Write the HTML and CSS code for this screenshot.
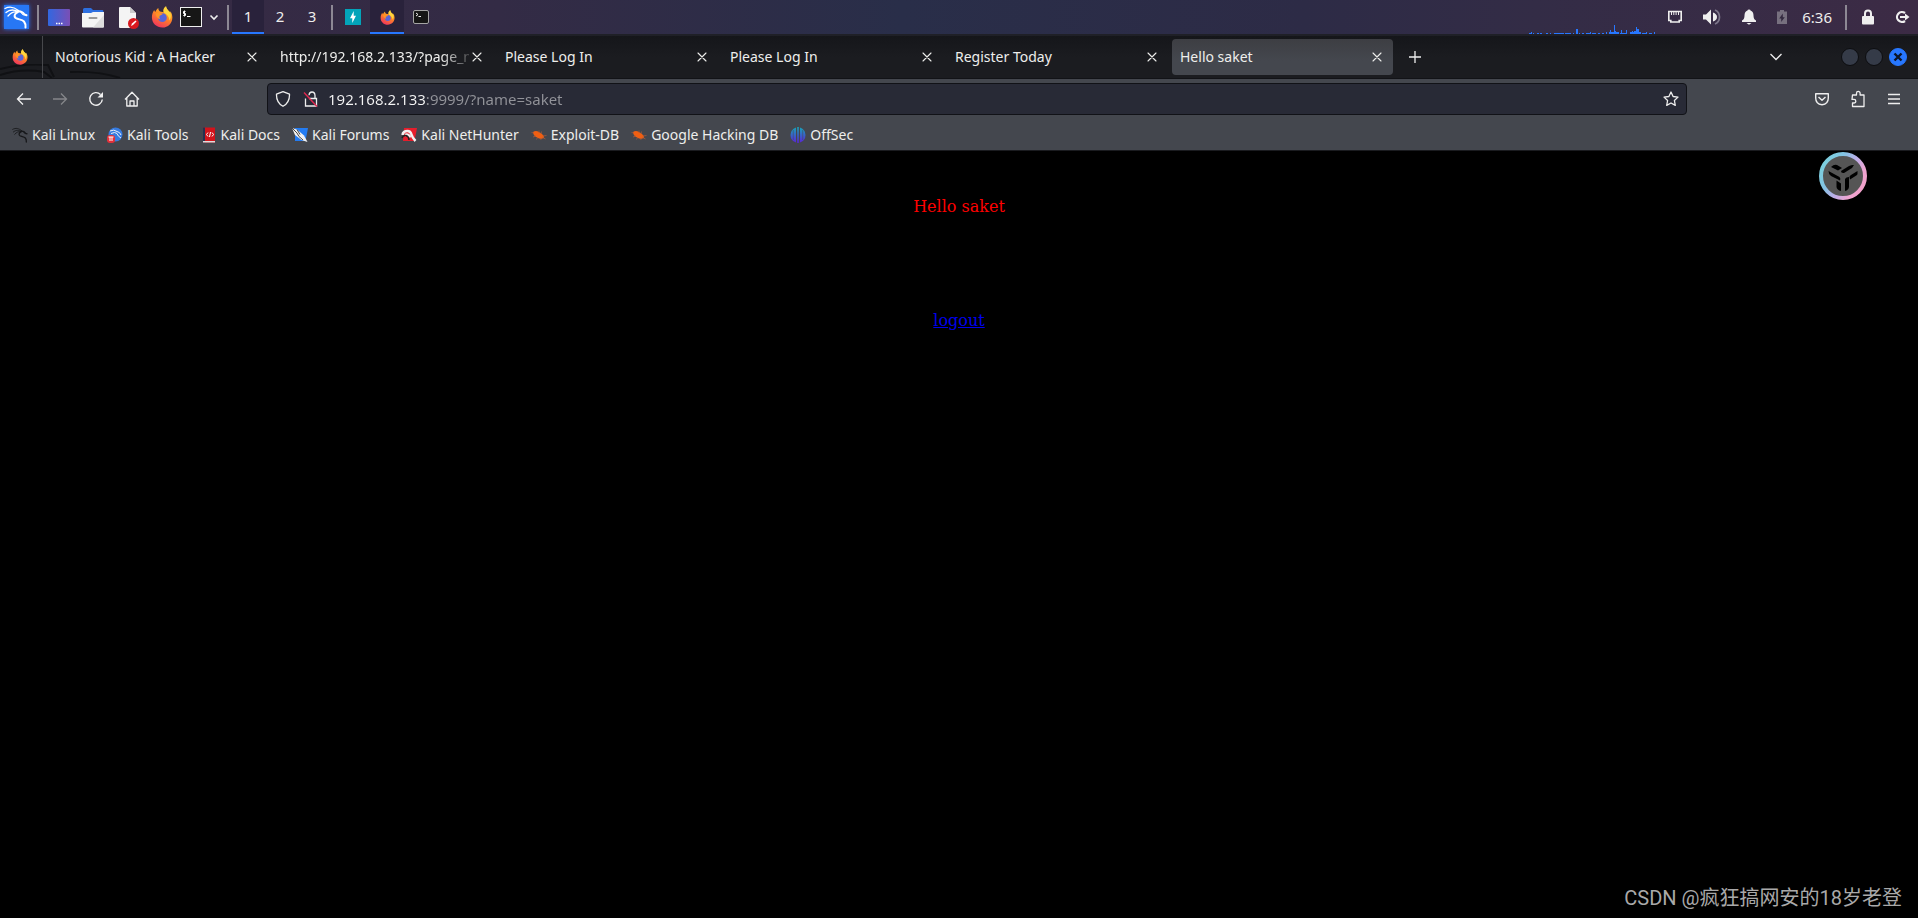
FILE: index.html
```html
<!DOCTYPE html>
<html lang="en">
<head>
<meta charset="utf-8">
<title>Hello saket</title>
<link rel="stylesheet" href="styles.css">
</head>
<body>
<svg class="defs" aria-hidden="true">
  <defs>
    <linearGradient id="desk" x1="0" y1="0" x2="1" y2="0"><stop offset="0" stop-color="#3267e0"/><stop offset="1" stop-color="#7a4fb5"/></linearGradient>
    <linearGradient id="flame" x1=".8" y1="0" x2=".3" y2="1"><stop offset="0" stop-color="#ffd43a"/><stop offset=".45" stop-color="#ff8a22"/><stop offset="1" stop-color="#f0335f"/></linearGradient>
    <linearGradient id="off" x1="0" y1="0" x2="0" y2="1"><stop offset="0" stop-color="#16a6b8"/><stop offset="1" stop-color="#5a22d8"/></linearGradient>
    <linearGradient id="ring" x1="0" y1=".2" x2="1" y2=".8"><stop offset="0" stop-color="#7bd0dc"/><stop offset=".3" stop-color="#83c4e4"/><stop offset=".55" stop-color="#bcaee8"/><stop offset=".8" stop-color="#efa5d2"/><stop offset="1" stop-color="#f2a0c8"/></linearGradient>
    <symbol id="dragon" viewBox="0 0 24 24">
      <g fill="none" stroke="currentColor" stroke-linecap="round" stroke-linejoin="round">
        <path stroke-width="1.3" d="M1 3.500C6 .8 10 2 14.500 5.500M2 7.500C6 4 10 4.500 14 6.500M4 11c3-3.500 6-4.500 9-4"/>
        <path stroke-width="2" d="M13 6.500c3-.8 5.500.2 7.500 3l2 .8M14 7c-3.500 1.500-4.500 4.500-2 6.200 2.500 1.500 6 1 8 3.300 1.300 1.600 1.700 3.600 1.500 6"/>
        <path stroke-width="1" d="M17 7.500c.5 1.500 1.500 2.300 3 2.500"/>
      </g>
    </symbol>
    <symbol id="firefox" viewBox="0 0 24 24">
      <path fill="url(#flame)" d="M12.500 23.500C6 23.500 1 18.800 1 12.600c0-3 .8-6 2.500-8.300.3 1 .7 1.700 1.200 2.300C5.500 4.800 6.500 3.200 8 2.200c0 1.800.6 3 1.800 3.800l4 .8c-.6-2.600.3-5 2.600-6.500.2 2.500 1.800 4 3.300 5.400.5.5.9 1 1.200 1.600l.3-1.700c1.400 2 2.100 4.400 2.100 6.900 0 6.300-4.700 11-10.800 11z"/>
      <path fill="#ffd63c" d="M16.400.3c.2 2.500 1.800 4 3.300 5.400 2.600 2.700 2.600 7.100.4 10-.2-4.200-2.400-6.400-6.300-8.900-.6-2.600.3-5 2.600-6.500z"/>
      <circle cx="12.400" cy="12.700" r="4.800" fill="#5865d8"/>
      <path fill="#ff9326" d="M5 8.500c2-1.500 4-1.500 5.500-.5l2.500.3c-.5 1.400-2 1.800-3.500 2.200-.6 1.500-.4 3 .8 3.900-1.800.1-5.300-2.900-5.300-5.900z"/>
    </symbol>
    <symbol id="close" viewBox="0 0 16 16"><path d="M4 4l8 8M12 4l-8 8" fill="none" stroke="currentColor" stroke-width="1.100" stroke-linecap="round"/></symbol>
    <symbol id="bug" viewBox="0 0 16 16">
      <path fill="#f05f12" d="M2 5c2-1.500 4-1.300 6 0 2.300 1.300 4.500 2.800 5.200 5.200-2 2-4.500 1.800-6.700.6C3.700 9.700 2.300 8 2 5z"/>
      <path stroke="#b05a38" stroke-width=".7" fill="none" d="M.5 5.500L3 6M2 10l3-1M5.500 12.500l1-2M10 13l-.5-2M8 3.500L8 6M10.500 4.500L10 7M15.500 8.500l-4 .6M14.500 12l-3-1.500"/>
    </symbol>
  </defs>
</svg>

<header class="panel">
  <button class="pbtn menu-btn" aria-label="Applications"><span class="kali"><svg width="24" height="24"><use href="#dragon"/></svg></span></button>
  <span class="sep"></span>
  <nav class="launchers" aria-label="Launchers">
    <button class="pbtn" aria-label="Show desktop"><svg width="22" height="24" viewBox="0 0 22 24"><rect y="4" width="22" height="17" rx="1" fill="url(#desk)"/><path d="M8 18.500h1.500M10.500 18.500H12M13 18.500h1.500" stroke="#fff" stroke-width="1.500"/></svg></button>
    <button class="pbtn" aria-label="Files"><svg width="22" height="24" viewBox="0 0 22 24"><path fill="#2d6fe0" d="M1 4.500Q1 3 2.500 3H9l2 2h9.500Q21.500 5 21.500 7v3H1z"/><path fill="#f4f4f4" d="M0 8h9l2-1h11v14.500q0 1-1 1H1q-1 0-1-1z"/><path fill="#dedede" d="M22 10v11.500q0 1-1 1H11z"/><path stroke="#9a9a9a" stroke-width="2" stroke-linecap="round" d="M7.500 13h7"/></svg></button>
    <button class="pbtn" aria-label="Text editor"><svg width="23" height="24" viewBox="-2 0 23 24"><path fill="#f4f4f4" d="M1 3q0-1 1-1h10l6 6v14q0 1-1 1H2q-1 0-1-1z"/><path fill="#c9c9c9" d="M12 2l6 6h-6z"/><circle cx="15.500" cy="18.500" r="5.500" fill="#d8191f"/><path d="M13 21l1-2.500 3.500-3 1 1-3.500 3.500z" fill="#fff"/></svg></button>
    <button class="pbtn" aria-label="Firefox"><svg width="22" height="22"><use href="#firefox"/></svg></button>
  </nav>
  <button class="pbtn term" aria-label="Terminal"><svg width="22" height="22" viewBox="0 0 22 22"><rect x=".5" y="1.500" width="21" height="19" fill="#161616" stroke="#efefef"/><path d="M5.500 5.500H3.500V7.500H5.500V9.500H3.300M4.500 4.500v6M7 10.500h3.500" fill="none" stroke="#fff"/></svg></button>
  <button class="pbtn more" aria-label="More terminals"><svg width="10" height="10" viewBox="0 0 10 10"><path d="M1.500 3.500L5 7l3.500-3.500" fill="none" stroke="#eee" stroke-width="1.600"/></svg></button>
  <span class="sep"></span>
  <nav class="spaces" aria-label="Workspaces">
    <button class="space on">1</button><button class="space">2</button><button class="space">3</button>
  </nav>
  <span class="sep"></span>
  <nav class="tasks" aria-label="Windows">
    <button class="task" aria-label="Burp Suite"><svg width="16" height="16" viewBox="0 0 16 16"><rect width="16" height="16" fill="#03a4b9"/><path fill="#fff" d="M8.700 2v4.800H11L7.300 14V9.200H5z"/></svg></button>
    <button class="task on" aria-label="Firefox"><svg width="15" height="15"><use href="#firefox"/></svg></button>
    <button class="task" aria-label="Terminal"><svg width="16" height="16" viewBox="0 0 16 16"><rect x=".5" y="1.500" width="15" height="13" rx="1.500" fill="#161616" stroke="#a5a5a5"/><path d="M3 4l2 1.500L3 7M5.500 7.500H8" fill="none" stroke="#eee"/></svg></button>
  </nav>
  <svg class="graph" width="128" height="10" viewBox="0 0 128 10" aria-hidden="true"><path fill="#2777ff" d="M0 9h2v1H0zM2 8h1v2H2zM4 9h1v1H4zM8 9h2v1H8zM11 9h2v1h-2zM17 9h2v1h-2zM21 9h1v1h-1zM25 9h10v1H25zM36 9h6v1h-6zM44 9h1v1h-1zM47 5h2v5h-2zM50 9h1v1h-1zM53 9h2v1h-2zM57 9h4v1h-4zM61 8h1v2h-1zM63 9h4v1h-4zM69 9h2v1h-2zM73 9h2v1h-2zM77 8h1v2h-1zM80 8h2v2h-2zM81 6h1v4h-1zM82 8h8v2h-8zM85 1h1v9h-1zM86 7h1v3h-1zM91 9h6v1h-6zM92 6h1v4h-1zM97 6h1v4h-1zM101 8h6v2h-6zM103 7h1v3h-1zM105 7h2v3h-2zM107 3h1v7h-1zM108 5h2v5h-2zM110 8h2v2h-2zM113 9h4v1h-4zM117 8h1v2h-1zM120 9h3v1h-3zM125 8h1v2h-1z"/></svg>
  <div class="tray">
    <button class="pbtn" aria-label="Network"><svg width="16" height="16" viewBox="0 0 16 16"><path fill="none" stroke="#efefef" stroke-width="1.600" d="M1.800 2.500h12.400v9h-2v1.500H3.800v-1.500h-2z"/><path stroke="#efefef" d="M4.500 3v3M6.800 3v3M9.100 3v3M11.500 3v3"/></svg></button>
    <button class="pbtn" aria-label="Volume"><svg width="18" height="16" viewBox="0 0 18 16"><path fill="#efefef" d="M0 5.500h3L8 .5v15l-5-5H0zM10 3.500q4 1.500 4 4.500t-4 4.500z"/><path fill="none" stroke="#7d768a" stroke-width="1.700" d="M12 1q4.500 2 4.500 7T12 15"/></svg></button>
    <button class="pbtn" aria-label="Notifications"><svg width="16" height="16" viewBox="0 0 16 16"><path fill="#efefef" d="M6.500 1.500Q6.500.5 8 .5t1.500 1Q12.500 2.500 12.500 6.500q0 4 2.500 5V13H1v-1.500q2.500-1 2.500-5 0-4 3-5zM5.500 14h5L8 15.800z"/></svg></button>
    <button class="pbtn" aria-label="Power"><svg width="10" height="16" viewBox="0 0 10 16"><path fill="#77707f" d="M0 2.500h3V1h4v1.500h3V15H0z"/><path fill="#342a40" d="M5.800 4.500v3.800h2L4.200 13V9.500h-2z"/></svg></button>
    <time class="clock">6:36</time>
    <span class="sep"></span>
    <button class="pbtn" aria-label="Lock screen"><svg width="12" height="16" viewBox="0 0 12 16"><path fill="none" stroke="#efefef" stroke-width="2" d="M3 8V4.500Q3 1.500 6 1.500t3 3V8"/><rect y="7" width="12" height="8.500" rx="1" fill="#efefef"/></svg></button>
    <button class="pbtn" aria-label="Log out"><svg width="16" height="16" viewBox="0 0 16 16"><path fill="none" stroke="#efefef" stroke-width="2.200" d="M11 4A5 5 0 1 0 11 12M6 8h6"/><path fill="#efefef" d="M11 4.500L15.500 8 11 11.500z"/></svg></button>
  </div>
</header>

<section class="tabbar">
  <svg class="ghost" width="130" height="14" viewBox="0 0 130 14" aria-hidden="true"><path fill="none" stroke="#101114" stroke-width="2" d="M0 5Q24-1 48 1l6 12M0 11Q22 4 44 8l8 6M70 8q30-1 50 6"/></svg>
  <button class="pin" aria-label="Firefox View"><svg width="16" height="16"><use href="#firefox"/></svg></button>
  <div class="tabs" role="tablist">
    <div class="tab" role="tab"><span class="title">Notorious Kid : A Hacker</span><button class="x" aria-label="Close tab"><svg width="16" height="16"><use href="#close"/></svg></button></div>
    <div class="tab" role="tab"><span class="title fade">http://192.168.2.133/?page_n</span><button class="x" aria-label="Close tab"><svg width="16" height="16"><use href="#close"/></svg></button></div>
    <div class="tab" role="tab"><span class="title">Please Log In</span><button class="x" aria-label="Close tab"><svg width="16" height="16"><use href="#close"/></svg></button></div>
    <div class="tab" role="tab"><span class="title">Please Log In</span><button class="x" aria-label="Close tab"><svg width="16" height="16"><use href="#close"/></svg></button></div>
    <div class="tab" role="tab"><span class="title">Register Today</span><button class="x" aria-label="Close tab"><svg width="16" height="16"><use href="#close"/></svg></button></div>
    <div class="tab on" role="tab" aria-selected="true"><span class="title">Hello saket</span><button class="x" aria-label="Close tab"><svg width="16" height="16"><use href="#close"/></svg></button></div>
  </div>
  <button class="tool new" aria-label="New tab"><svg width="16" height="16" viewBox="0 0 16 16"><path d="M8 2v12M2 8h12" stroke="#eee" stroke-width="1.300"/></svg></button>
  <div class="winctl">
    <button class="tool all" aria-label="List all tabs"><svg width="16" height="16" viewBox="0 0 16 16"><path d="M2.500 5L8 10.500 13.500 5" fill="none" stroke="#eee" stroke-width="1.300"/></svg></button>
    <button class="dot" aria-label="Minimize"></button>
    <button class="dot" aria-label="Maximize"></button>
    <button class="dot quit" aria-label="Close window"><svg width="10" height="10" viewBox="0 0 10 10"><path d="M1.500 1.500l7 7M8.500 1.500l-7 7" stroke="#0c1528" stroke-width="2.400"/></svg></button>
  </div>
</section>

<section class="navbar">
  <div class="group">
    <button class="tool" aria-label="Back"><svg width="16" height="16" viewBox="0 0 16 16"><path d="M15 8H1.500M7 2.500L1.500 8 7 13.500" fill="none" stroke="#f0f0f0" stroke-width="1.300"/></svg></button>
    <button class="tool" aria-label="Forward" disabled><svg width="16" height="16" viewBox="0 0 16 16"><path d="M1 8h13.500M9 2.500L14.500 8 9 13.500" fill="none" stroke="#85868a" stroke-width="1.300"/></svg></button>
    <button class="tool" aria-label="Reload"><svg width="16" height="16" viewBox="0 0 16 16"><path d="M12.500 3.500A6.300 6.300 0 1 0 14.300 8.500" fill="none" stroke="#f0f0f0" stroke-width="1.400"/><path d="M15 1v5.500H9.500z" fill="#f0f0f0"/></svg></button>
    <button class="tool" aria-label="Home"><svg width="16" height="16" viewBox="0 0 16 16"><path d="M1 8.500L8 1.200l7 7.300M2.800 7v8h10.400V7M6 15v-5h4v5" fill="none" stroke="#f0f0f0" stroke-width="1.300" stroke-linejoin="round"/></svg></button>
  </div>
  <div class="urlbar">
    <svg width="16" height="16" viewBox="0 0 16 16"><path d="M8 .7l6.500 2.500Q14.800 11.500 8 15.300 1.200 11.500 1.500 3.200z" fill="none" stroke="#eee" stroke-width="1.300" stroke-linejoin="round"/></svg>
    <svg class="lock" width="16" height="16" viewBox="0 0 16 16"><path d="M6 4.200Q6.200 1 9 1t3 3.500V7M6 7.500h7.500V15h-11V7.500" fill="none" stroke="#eee" stroke-width="1.300"/><path d="M1 1.500l13 14" stroke="#e22850" stroke-width="1.400"/></svg>
    <input class="url" type="text" aria-label="Address" value="192.168.2.133:9999/?name=saket">
    <button class="star" aria-label="Bookmark this page"><svg width="16" height="16" viewBox="0 0 16 16"><path d="M8 1l2.100 4.500 4.900.6-3.600 3.400.9 4.900L8 12l-4.300 2.400.9-4.900L1 6.100l4.900-.6z" fill="none" stroke="#eee" stroke-width="1.300" stroke-linejoin="round"/></svg></button>
  </div>
  <div class="group end">
    <button class="tool" aria-label="Save to Pocket"><svg width="16" height="16" viewBox="0 0 16 16"><path d="M1.700 2.700h12.600V7q0 6-6.300 6.800Q1.700 13 1.700 7zM4.500 6L8 9.300 11.500 6" fill="none" stroke="#eee" stroke-width="1.400" stroke-linejoin="round"/></svg></button>
    <button class="tool" aria-label="Extensions"><svg width="16" height="18" viewBox="0 0 16 18"><path d="M2.500 5H6.500V3.200a1.800 1.800 0 0 1 3.600 0V5H14v11.500H2.500V13H4a1.800 1.800 0 0 0 0-3.600H2z" fill="none" stroke="#eee" stroke-width="1.300" stroke-linejoin="round"/></svg></button>
    <button class="tool" aria-label="Menu"><svg width="16" height="16" viewBox="0 0 16 16"><path d="M2 3.500h12M2 8h12M2 12.500h12" stroke="#eee" stroke-width="1.300"/></svg></button>
  </div>
</section>

<nav class="bookmarks" aria-label="Bookmarks">
  <a href="#"><svg class="dark" width="16" height="16"><use href="#dragon"/></svg>Kali Linux</a>
  <a href="#"><svg width="16" height="16" viewBox="0 0 16 16"><circle cx="8.500" cy="7.500" r="7" fill="#367be0"/><path d="M3 4q4-2 7 .5 3 .5 4 3.500M4 6.500q4-2 6 0 1 3 4 4.500" fill="none" stroke="#e9f0fb"/><rect y="8" width="8" height="8" rx="3" fill="#e2303a"/><path d="M1.500 10h5M3 10v4M5 10v4" stroke="#fff"/></svg>Kali Tools</a>
  <a href="#"><svg width="16" height="16" viewBox="0 0 16 16"><rect x="2" y=".5" width="12" height="15" fill="#d3131b"/><path fill="#263150" d="M2 .5h2v15H2z"/><path fill="#ddd" d="M2 14h12v1.500H2z"/><path d="M7 5.500L5.500 7.500 7 9.500M11 5.500l1.500 2L11 9.500M9.500 5l-1 5" fill="none" stroke="#fff"/></svg>Kali Docs</a>
  <a href="#"><svg width="16" height="16" viewBox="0 0 16 16"><path fill="#247cf2" d="M3 1h13l-2.500 13H3z"/><path fill="#f2f2f2" d="M0 1l5 1.500 7 6 3.500 6.500-6-2L3 8z"/><path d="M0 1l5 5 2 3.500 4 3.500M5 2.500l3 5" fill="none" stroke="#444"/></svg>Kali Forums</a>
  <a href="#"><svg width="16" height="16" viewBox="0 0 16 16"><path fill="#e51e2c" d="M3 1h13l-2.500 13H2z"/><path d="M1.500 8Q2 4 6.500 4q3 0 4 3.500t4 6.500M4 8q4-1.500 5 2.500" fill="none" stroke="#f2f2f2" stroke-width="2.500"/><path d="M1 11q1-3 4-2.500 3 1 3 4.500" fill="none" stroke="#222" stroke-width="1.500"/></svg>Kali NetHunter</a>
  <a href="#"><svg width="16" height="16"><use href="#bug"/></svg>Exploit-DB</a>
  <a href="#"><svg width="16" height="16"><use href="#bug"/></svg>Google Hacking DB</a>
  <a href="#"><svg width="16" height="16" viewBox="0 0 16 16"><path fill="url(#off)" d="M6 .5v15Q.5 13.500.5 8T6 .5zM7.200 0h1.600v16H7.200zM10 .5Q15.500 2.500 15.500 8T10 15.500z"/><path d="M3.300 3v10M12.700 3v10" stroke="#44474e" stroke-width=".5"/></svg>OffSec</a>
</nav>

<main class="page">
  <p class="hello">Hello saket</p>
  <a class="logout" href="#">logout</a>
  <svg class="badge" width="48" height="48" viewBox="0 0 48 48" aria-hidden="true">
    <circle cx="24" cy="24" r="22" fill="#555" stroke="url(#ring)" stroke-width="4"/>
    <g fill="#000"><path d="M12 15q3-3 6-2l5 3-4 2.500z"/><path d="M22 19l8-5q3-1.500 5-1l-2 3-8 5q-3 .5-3-2z"/><path d="M9.500 19l11 6q1.500 1.500.5 3.500L12 24q-2.500-1.500-2.500-5z"/><path d="M38.500 19v3q0 1-2 2L31 27.500l-.5-2.500q0-1 1.500-2z"/><path d="M17.500 28.500l4.500 3v7.500q-4-1-4.500-4z"/><path d="M26 27q1-2 4-2v10q-.5 3-4 4z"/></g>
  </svg>
  <p class="mark">CSDN @疯狂搞网安的18岁老登</p>
</main>
</body>
</html>
```
FILE: styles.css
```css
* { box-sizing: border-box; }
html, body { height: 100%; }
body {
  margin: 0;
  display: flex;
  flex-direction: column;
  background: #000;
  color: #eeeeec;
  font: 14px/20px "Noto Sans", "Noto Sans CJK SC", sans-serif;
}
button {
  margin: 0;
  padding: 0;
  border: 0;
  background: none;
  color: inherit;
  font: inherit;
  display: flex;
  align-items: center;
  justify-content: center;
}
svg { display: block; flex: none; }
.defs { position: absolute; width: 0; height: 0; }

/* Desktop panel */
.panel {
  flex: none;
  display: flex;
  align-items: center;
  height: 36px;
  padding: 0 8px 2px 4px;
  background: linear-gradient(#1f2027, #1f2027) bottom / 100% 2px no-repeat,
    linear-gradient(90deg, #372a43 0, #332b45 26%, #292e49 47%, #2d2b46 68%, #332c46 80%, #3c2b45 100%);
}
.sep { flex: none; width: 2px; height: 25px; background: #8d8894; }
.kali {
  width: 25px;
  height: 24px;
  background: #2777f5;
  color: #fff;
  box-shadow: 0 0 4px #2777ff;
}
.menu-btn { margin-right: 8px; }
.launchers { display: flex; align-items: center; gap: 12px; margin-left: 9px; }
.term { margin-left: 7px; }
.more { margin: 0 8px 0 7px; }
.spaces { display: flex; margin: 0 3px; align-self: stretch; font-size: 15px; }
.space { width: 32px; border-bottom: 2px solid transparent; }
.tasks { display: flex; margin-left: 3px; align-self: stretch; }
.task { width: 34px; border-bottom: 2px solid transparent; border-top: 2px solid transparent; }
.space.on, .task.on { background: #29223b; border-bottom-color: #2777ff; border-top-color: #29223b; }
.graph { margin-left: auto; align-self: flex-end; }
.tray { display: flex; align-items: center; margin-left: 10px; gap: 20px; }
.tray .sep { margin-right: -5px; }
.clock { margin: 0 -7px 0 -5px; font-size: 15px; }

/* Browser tabs */
.tabbar {
  position: relative;
  flex: none;
  display: flex;
  align-items: center;
  height: 43px;
  padding-right: 11px;
  border-bottom: 1px solid #121317;
  background: linear-gradient(#15161a, #1b1c20 50%);
}
.ghost { position: absolute; left: 0; bottom: 0; }
.pin { position: relative; flex: none; width: 43px; height: 100%; padding-right: 2px; border-right: 1px solid #47484c; }
.tabs { display: flex; flex: 0 1 1346px; gap: 4px; margin: 0 4px; }
.tab {
  flex: 1 1 0;
  min-width: 0;
  display: flex;
  align-items: center;
  height: 36px;
  padding: 0 8px;
  border-radius: 4px;
}
.tab.on { background: linear-gradient(#3d3e43, #44474e 60%); }
.title { flex: 1; min-width: 0; overflow: hidden; white-space: nowrap; }
.fade { -webkit-mask-image: linear-gradient(90deg, #000 85%, transparent 104%); mask-image: linear-gradient(90deg, #000 85%, transparent 104%); }
.x { flex: none; width: 16px; height: 16px; }
.tool { flex: none; width: 36px; height: 32px; }
.winctl { display: flex; align-items: center; gap: 6px; margin-left: auto; }
.all { margin-right: 41px; }
.dot { flex: none; width: 18px; height: 18px; border: 1px solid #0c0d10; border-radius: 50%; background: #353b48; }
.quit { border-color: #2777ff; background: #2777ff; }

/* Toolbar */
.navbar {
  flex: none;
  display: flex;
  align-items: center;
  justify-content: space-between;
  height: 40px;
  padding: 0 6px;
  background: #44474e;
}
.group { display: flex; width: 261px; }
.end { width: 225px; justify-content: flex-end; }
.urlbar {
  flex: 1;
  display: flex;
  align-items: center;
  height: 32px;
  padding: 0 7px;
  border: 1px solid #111217;
  border-radius: 4px;
  background: #282a36;
}
.lock { margin-left: 12px; }
.url {
  flex: 1;
  min-width: 0;
  margin-left: 9px;
  padding: 0;
  border: 0;
  outline: 0;
  color: transparent;
  font: inherit;
  font-size: 15px;
  background: linear-gradient(90deg, #f5f5f5 98px, #929399 98px);
  -webkit-background-clip: text;
  background-clip: text;
}
.bookmarks {
  flex: none;
  display: flex;
  align-items: center;
  gap: 12px;
  height: 32px;
  padding: 0 12px;
  border-bottom: 1px solid #1a1b1f;
  background: #44474e;
}
.bookmarks a { display: flex; align-items: center; gap: 4px; color: inherit; text-decoration: none; white-space: nowrap; }
.dark { color: #17181b; }

/* Web page */
.page {
  position: relative;
  flex: 1;
  display: flex;
  flex-direction: column;
  align-items: center;
  gap: 95px;
  padding-top: 46px;
  font: 16px/19px "DejaVu Serif", serif;
}
.hello { margin: 0; color: #f00; }
.logout { color: #00e; }
.badge { position: absolute; top: 1px; right: 51px; }
.mark {
  position: absolute;
  right: 16px;
  bottom: 6px;
  margin: 0;
  color: #a9a9a9;
  font: 20px/28px Roboto, "Noto Sans CJK SC", sans-serif;
}
```
